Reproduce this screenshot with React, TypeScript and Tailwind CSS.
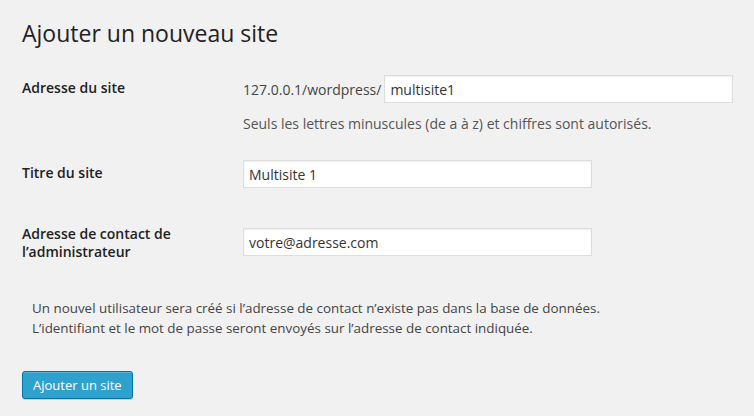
export default function App() {
  return (
    <div className="min-h-screen bg-[#f1f1f1] font-['Open_Sans',sans-serif] text-[#444] pl-[22px] pt-[19px]">
      <h1 className="text-[23px] leading-[29px] font-normal text-[#222]">Ajouter un nouveau site</h1>

      {/* Adresse du site */}
      <div className="flex items-start mt-[27px]">
        <div className="w-[221px] pt-[3.5px] text-[14px] leading-[1.3] font-semibold text-[#222]">Adresse du site</div>
        <div className="flex flex-col">
          <div className="flex items-center text-[14px]">
            <span className="mr-[3px]">127.0.0.1/wordpress/</span>
            <input
              type="text"
              defaultValue="multisite1"
              className="h-[28px] w-[349px] bg-white border border-[#ddd] shadow-[inset_0_1px_2px_rgba(0,0,0,0.07)] px-[5px] text-[14px] text-[#333] outline-none"
            />
          </div>
          <p className="mt-[11px] text-[14px] leading-[20px] text-[#555]">
            Seuls les lettres minuscules (de a à z) et chiffres sont autorisés.
          </p>
        </div>
      </div>

      {/* Titre du site */}
      <div className="flex items-start mt-[26px]">
        <div className="w-[221px] pt-[3.5px] text-[14px] leading-[1.3] font-semibold text-[#222]">Titre du site</div>
        <input
          type="text"
          defaultValue="Multisite 1"
          className="h-[28px] w-[349px] bg-white border border-[#ddd] shadow-[inset_0_1px_2px_rgba(0,0,0,0.07)] px-[5px] text-[14px] text-[#333] outline-none"
        />
      </div>

      {/* Adresse de contact */}
      <div className="flex items-start mt-[36.5px]">
        <div className="w-[221px] text-[14px] leading-[1.3] font-semibold text-[#222]">
          Adresse de contact de
          <br />
          l’administrateur
        </div>
        <input
          type="text"
          defaultValue="votre@adresse.com"
          className="mt-[3.5px] h-[28px] w-[349px] bg-white border border-[#ddd] shadow-[inset_0_1px_2px_rgba(0,0,0,0.07)] px-[5px] text-[14px] text-[#333] outline-none"
        />
      </div>

      <p className="mt-[38.5px] pl-[10px] text-[13.4px] leading-[19.5px]">
        Un nouvel utilisateur sera créé si l’adresse de contact n’existe pas dans la base de données.
        <br />
        L’identifiant et le mot de passe seront envoyés sur l’adresse de contact indiquée.
      </p>

      <button
        type="button"
        className="mt-[33px] h-[28px] px-[10px] rounded-[3px] bg-[#2ea2cc] border border-[#0074a2] text-white text-[13px] leading-[26px] shadow-[inset_0_1px_0_rgba(120,200,230,0.5),0_1px_0_rgba(0,0,0,0.15)]"
      >
        Ajouter un site
      </button>
    </div>
  );
}
